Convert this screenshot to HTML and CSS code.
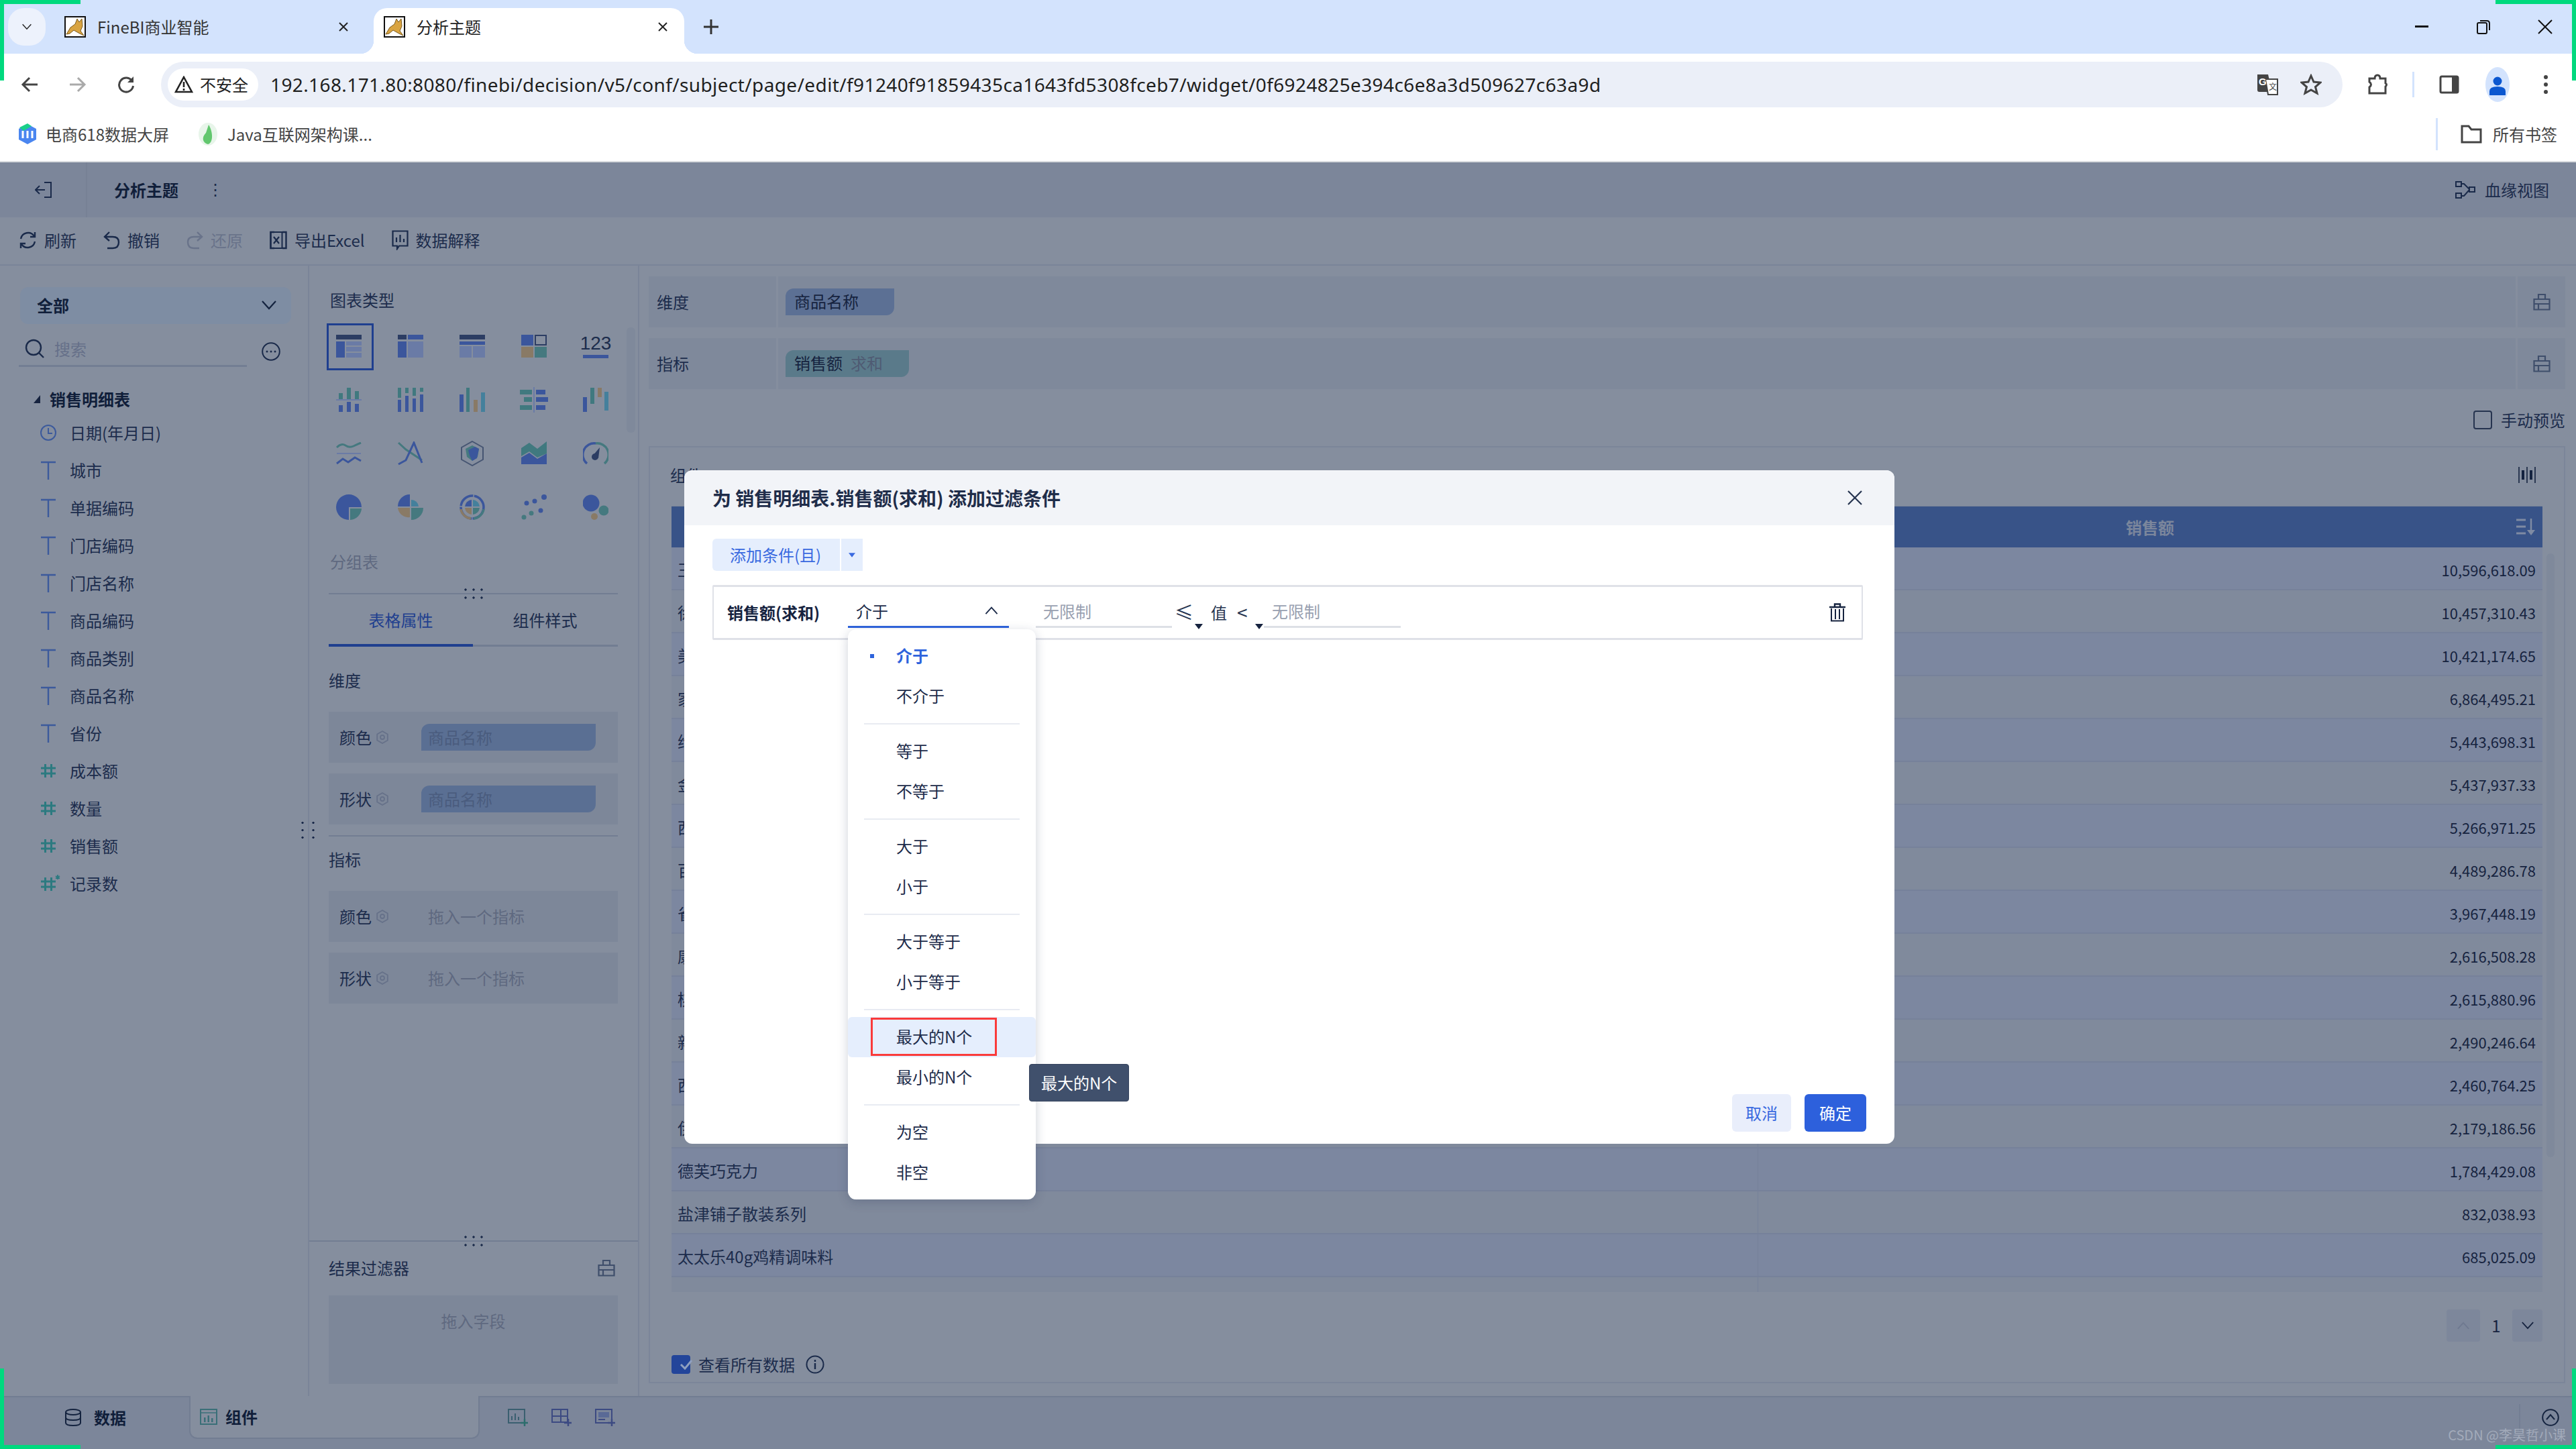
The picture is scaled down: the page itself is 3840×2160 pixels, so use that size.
FILE: index.html
```html
<!DOCTYPE html>
<html lang="zh-CN">
<head>
<meta charset="utf-8">
<title>分析主题</title>
<link rel="stylesheet" href="styles.css">
</head>
<body>
<svg class="defs" width="0" height="0">
  <defs>
    <symbol id="cat" viewBox="0 0 32 32">
      <rect x="1" y="1" width="30" height="30" fill="#fff" stroke="#111" stroke-width="2"/>
      <path d="M3 27 L9 17 L16 12 L19 4 L22 9 L26 4 L27 15 L24 22 L29 29 L21 25 L14 21 L8 26 Z" fill="#d9a441" stroke="#7a5a1c" stroke-width="1"/>
    </symbol>
    <symbol id="x" viewBox="0 0 24 24"><path d="M4 4 L20 20 M20 4 L4 20" fill="none" stroke="currentColor" stroke-width="2.6"/></symbol>
    <symbol id="T" viewBox="0 0 24 30"><path d="M1 3 H23 M12 3 V29" fill="none" stroke="#3c5a9c" stroke-width="2.4"/></symbol>
    <symbol id="hash" viewBox="0 0 24 24"><path d="M7.5 2 V22 M16.5 2 V22 M1 8 H23 M1 16 H23" fill="none" stroke="#2c7a80" stroke-width="3"/></symbol>
    <symbol id="gear" viewBox="0 0 20 20"><path d="M10 1 L17.8 5.5 V14.5 L10 19 L2.2 14.5 V5.500 Z" fill="none" stroke="#667189" stroke-width="1.8"/><circle cx="10" cy="10" r="3" fill="none" stroke="#667189" stroke-width="1.800"/></symbol>
    <symbol id="kit" viewBox="0 0 26 26"><path d="M1.500 9 H24.500 V24.500 H1.500 Z M8 9 V2 H18 V9 M1.500 16 H24.500 M8 16 V24" fill="none" stroke="#3f4e6b" stroke-width="2.200"/></symbol>
    <symbol id="tri" viewBox="0 0 12 8"><path d="M0 0 H12 L6 8 Z" fill="currentColor"/></symbol>
    <symbol id="chev" viewBox="0 0 22 14"><path d="M1 1 L11 12 L21 1" fill="none" stroke="currentColor" stroke-width="2.200"/></symbol>
  </defs>
</svg>

<div class="page">
  <header class="tabbar">
    <div class="tab-menu"><svg class="ico-chev" width="14" height="10"><use href="#chev"/></svg></div>
    <div class="tab tab-a"><svg width="32" height="32"><use href="#cat"/></svg><span class="tab-title">FineBI商业智能</span><svg class="tab-x" width="18" height="18"><use href="#x"/></svg></div>
    <div class="tab tab-b"><svg width="32" height="32"><use href="#cat"/></svg><span class="tab-title">分析主题</span><svg class="tab-x" width="18" height="18"><use href="#x"/></svg></div>
    <svg class="tab-plus" width="22" height="22" viewBox="0 0 22 22"><path d="M11 0 V22 M0 11 H22" stroke="#333" stroke-width="3"/></svg>
    <div class="win">
      <div class="win-btn"><svg width="20" height="4"><rect width="20" height="3" fill="#111"/></svg></div>
      <div class="win-btn"><svg width="20" height="22" viewBox="0 0 20 22"><rect x="1" y="5" width="14" height="16" rx="2" fill="none" stroke="#111" stroke-width="2"/><path d="M5 2 H15 Q19 2 19 6 V16" fill="none" stroke="#111" stroke-width="2"/></svg></div>
      <div class="win-btn"><svg width="22" height="22" viewBox="0 0 22 22"><path d="M1 1 L21 21 M21 1 L1 21" stroke="#111" stroke-width="2"/></svg></div>
    </div>
  </header>

  <div class="addrbar">
    <div class="nav-btn"><svg width="26" height="24" viewBox="0 0 26 24"><path d="M13 2 L3 12 L13 22 M3 12 H25" fill="none" stroke="#444" stroke-width="3"/></svg></div>
    <div class="nav-btn"><svg width="26" height="24" viewBox="0 0 26 24"><path d="M13 2 L23 12 L13 22 M23 12 H1" fill="none" stroke="#aaa" stroke-width="3"/></svg></div>
    <div class="nav-btn"><svg width="26" height="26" viewBox="0 0 26 26"><path d="M22 8 A10.500 10.500 0 1 0 23.500 15" fill="none" stroke="#444" stroke-width="3"/><path d="M24 1 V10 H15 Z" fill="#444"/></svg></div>
    <div class="omni">
      <div class="chip"><svg width="28" height="26" viewBox="0 0 28 26"><path d="M14 2 L26 24 H2 Z" fill="none" stroke="#222" stroke-width="2.600"/><path d="M14 9 V17 M14 19 V22" stroke="#222" stroke-width="2.600"/></svg><span>不安全</span></div>
      <span class="url">192.168.171.80:8080/finebi/decision/v5/conf/subject/page/edit/f91240f91859435ca1643fd5308fceb7/widget/0f6924825e394c6e8a3d509627c63a9d</span>
      <div class="omni-btn"><svg width="34" height="34" viewBox="0 0 34 34"><path d="M2 2 H18 L24 28 H5 Q2 28 2 25 Z" fill="#444"/><path d="M14 9 H32 V32 H18 Z" fill="#fff" stroke="#444" stroke-width="2"/><text x="4" y="18" class="g-text">G</text><text x="19" y="25" class="a-text">文</text></svg></div>
      <div class="omni-btn"><svg width="32" height="32" viewBox="0 0 32 32"><path d="M16 3 L20 12 L30 13 L22.500 19.500 L25 29 L16 24 L7 29 L9.500 19.500 L2 13 L12 12 Z" fill="none" stroke="#444" stroke-width="3"/></svg></div>
    </div>
    <div class="nav-btn nav-puzzle"><svg width="32" height="32" viewBox="0 0 32 32"><path d="M4 7 H12 Q12 2 16 2 Q20 2 20 7 H28 V14 Q31 16 28 19 V29 H4 V20 Q9 16 4 12 Z" fill="none" stroke="#444" stroke-width="3"/></svg></div>
    <div class="vsep"></div>
    <div class="nav-btn"><svg width="30" height="28" viewBox="0 0 30 28"><rect x="2" y="2" width="26" height="24" rx="2" fill="none" stroke="#444" stroke-width="3"/><rect x="19" y="2" width="9" height="24" fill="#444"/></svg></div>
    <div class="nav-btn"><div class="avatar"><svg width="28" height="32" viewBox="0 0 28 32"><circle cx="14" cy="9" r="6.500" fill="#0b57d0"/><path d="M2 30 V24 Q2 17 14 17 Q26 17 26 24 V30 Z" fill="#0b57d0"/></svg></div></div>
    <div class="nav-btn"><svg width="6" height="30" viewBox="0 0 6 30"><circle cx="3" cy="4" r="3" fill="#444"/><circle cx="3" cy="15" r="3" fill="#444"/><circle cx="3" cy="26" r="3" fill="#444"/></svg></div>
  </div>

  <div class="bookmarks">
    <svg class="bm-ico" width="28" height="32" viewBox="0 0 28 32"><path d="M14 1 L27 8 V24 L14 31 L1 24 V8 Z" fill="#4a86f0"/><path d="M7 11 V22 M14 11 V22 M21 11 V22" stroke="#fff" stroke-width="3"/><path d="M2 6 L14 0 L20 4 L8 11 Z" fill="#19d08a"/></svg>
    <span class="bm-text">电商618数据大屏</span>
    <svg class="bm-ico bm-second" width="28" height="34" viewBox="0 0 28 34"><ellipse cx="14" cy="17" rx="14" ry="17" fill="#e8f5ea"/><path d="M15 3 C22 14 22 30 14 32 C6 30 4 22 11 15 Z" fill="#62c76e"/></svg>
    <span class="bm-text">Java互联网架构课...</span>
    <div class="bm-right">
      <div class="vsep vsep-tall"></div>
      <svg width="32" height="28" viewBox="0 0 32 28"><path d="M2 2 H12 L16 7 H30 V26 H2 Z" fill="none" stroke="#444" stroke-width="3"/></svg>
      <span class="bm-text">所有书签</span>
    </div>
  </div>

  <div class="app">
    <div class="app-head">
      <div class="back-cell"><svg width="26" height="26" viewBox="0 0 26 26"><path d="M14 2 H24 V24 H14 M1 13 H15 M7 7 L1 13 L7 19" fill="none" stroke="#1a2a4a" stroke-width="2"/></svg></div>
      <span class="subject">分析主题</span>
      <span class="kebab">⋮</span>
      <div class="lineage"><svg width="30" height="26" viewBox="0 0 30 26"><rect x="1" y="1" width="8" height="7" fill="none" stroke="#1a2a4a" stroke-width="2"/><rect x="1" y="18" width="8" height="7" fill="none" stroke="#1a2a4a" stroke-width="2"/><rect x="21" y="9" width="8" height="7" fill="none" stroke="#1a2a4a" stroke-width="2"/><path d="M9 4 H13 L21 12 M9 22 H13 L21 13" fill="none" stroke="#1a2a4a" stroke-width="2"/></svg><span>血缘视图</span></div>
    </div>
    <div class="toolbar">
      <div class="tool"><svg width="27" height="28" viewBox="0 0 27 28"><path d="M3 12 A11 11 0 0 1 23 8 M24 16 A11 11 0 0 1 4 20" fill="none" stroke="#1a2a4a" stroke-width="2.400"/><path d="M24 2 V9 H17 M3 26 V19 H10" fill="none" stroke="#1a2a4a" stroke-width="2.400"/></svg><span>刷新</span></div>
      <div class="tool"><svg width="25" height="28" viewBox="0 0 25 28"><path d="M9 2 L2 9 L9 15 M2 9 H14 Q23 9 23 17 Q23 26 14 26 H6" fill="none" stroke="#1a2a4a" stroke-width="2.400"/></svg><span>撤销</span></div>
      <div class="tool tool-off"><svg width="25" height="28" viewBox="0 0 25 28"><path d="M16 2 L23 9 L16 15 M23 9 H11 Q2 9 2 17 Q2 26 11 26 H19" fill="none" stroke="#69738a" stroke-width="2.400"/></svg><span>还原</span></div>
      <div class="tool"><svg width="26" height="28" viewBox="0 0 26 28"><path d="M7 2 H1.500 V26 H7 M19 2 H24.500 V26 H19" fill="none" stroke="#1a2a4a" stroke-width="2.400"/><rect x="1.500" y="2" width="17" height="24" fill="none" stroke="#1a2a4a" stroke-width="2"/><path d="M6 9 L14 19 M14 9 L6 19" stroke="#1a2a4a" stroke-width="2.200"/></svg><span>导出Excel</span></div>
      <div class="tool"><svg width="25" height="30" viewBox="0 0 25 30"><path d="M1.500 1.500 H23.500 V23.500 H11 L8 28 V23.500 H1.500 Z M7 11 V18 M12.500 7 V18 M18 13 V18" fill="none" stroke="#1a2a4a" stroke-width="2.200"/></svg><span>数据解释</span></div>
    </div>

    <div class="main">
      <aside class="fields">
        <div class="scope"><span>全部</span><svg class="scope-chev" width="22" height="14"><use href="#chev"/></svg></div>
        <div class="search-row">
          <div class="search"><svg width="30" height="30" viewBox="0 0 30 30"><circle cx="13" cy="13" r="11" fill="none" stroke="#1a2a4a" stroke-width="2.400"/><path d="M21 21 L28 28" stroke="#1a2a4a" stroke-width="2.400"/></svg><span>搜索</span></div>
          <svg class="more" width="28" height="28" viewBox="0 0 28 28"><circle cx="14" cy="14" r="12.800" fill="none" stroke="#1a2a4a" stroke-width="2"/><circle cx="8" cy="14" r="1.500" fill="#1a2a4a"/><circle cx="14" cy="14" r="1.500" fill="#1a2a4a"/><circle cx="20" cy="14" r="1.500" fill="#1a2a4a"/></svg>
        </div>
        <div class="tree-title"><i class="tree-tri"></i><span>销售明细表</span></div>
        <ul class="tree">
          <li><svg width="24" height="26" viewBox="0 0 24 26"><circle cx="12" cy="13" r="11" fill="none" stroke="#3c5a9c" stroke-width="2"/><path d="M12 6 V14 H18" fill="none" stroke="#3c5a9c" stroke-width="2"/></svg><span>日期(年月日)</span></li>
          <li><svg width="24" height="30"><use href="#T"/></svg><span>城市</span></li>
          <li><svg width="24" height="30"><use href="#T"/></svg><span>单据编码</span></li>
          <li><svg width="24" height="30"><use href="#T"/></svg><span>门店编码</span></li>
          <li><svg width="24" height="30"><use href="#T"/></svg><span>门店名称</span></li>
          <li><svg width="24" height="30"><use href="#T"/></svg><span>商品编码</span></li>
          <li><svg width="24" height="30"><use href="#T"/></svg><span>商品类别</span></li>
          <li><svg width="24" height="30"><use href="#T"/></svg><span>商品名称</span></li>
          <li><svg width="24" height="30"><use href="#T"/></svg><span>省份</span></li>
          <li><svg width="24" height="24"><use href="#hash"/></svg><span>成本额</span></li>
          <li><svg width="24" height="24"><use href="#hash"/></svg><span>数量</span></li>
          <li><svg width="24" height="24"><use href="#hash"/></svg><span>销售额</span></li>
          <li><svg class="hash-star" width="30" height="26" viewBox="0 0 30 26"><path d="M7.500 4 V24 M16.500 4 V24 M1 10 H23 M1 18 H23" fill="none" stroke="#2c7a80" stroke-width="3"/><path d="M26 0 V7 M23 2 L29 5.500 M29 2 L23 5.500" stroke="#2c7a80" stroke-width="1.800"/></svg><span>记录数</span></li>
        </ul>
        <div class="grip grip-v"></div>
      </aside>

      <section class="config">
        <div class="config-top">
          <div class="lbl lbl-head">图表类型</div>
          <div class="chart-grid">
            <div class="chart is-on"><svg width="38" height="34" viewBox="0 0 38 34"><rect width="38" height="7" fill="#2c3d63"/><rect y="10" width="13" height="24" fill="#3b569c"/><rect x="15" y="10" width="23" height="6" fill="#6a7ba6"/><rect x="15" y="18" width="23" height="7" fill="#6a7ba6"/><rect x="15" y="27" width="23" height="7" fill="#6a7ba6"/></svg></div>
            <div class="chart"><svg width="38" height="34" viewBox="0 0 38 34"><rect width="13" height="7" fill="#2c3d63"/><rect x="15" width="23" height="7" fill="#3b569c"/><rect y="10" width="13" height="24" fill="#3b569c"/><rect x="15" y="10" width="23" height="24" fill="#6a7ba6"/></svg></div>
            <div class="chart"><svg width="38" height="34" viewBox="0 0 38 34"><rect width="38" height="7" fill="#2c3d63"/><rect y="10" width="38" height="5" fill="#3b569c"/><rect y="17" width="18" height="17" fill="#6a7ba6"/><rect x="20" y="17" width="18" height="17" fill="#6a7ba6"/></svg></div>
            <div class="chart"><svg width="38" height="34" viewBox="0 0 38 34"><rect width="18" height="16" fill="#3b569c"/><rect x="21" y="1" width="16" height="14" fill="none" stroke="#2c3d63" stroke-width="2"/><rect y="18" width="18" height="16" fill="#897a66"/><rect x="20" y="18" width="18" height="16" fill="#45797f"/></svg></div>
            <div class="chart chart-num"><span>123</span><i></i></div>

            <div class="chart"><svg width="38" height="36" viewBox="0 0 38 36"><rect x="4" y="8" width="6" height="10" fill="#40797f"/><rect x="16" width="6" height="18" fill="#40797f"/><rect x="28" y="5" width="6" height="13" fill="#40797f"/><rect y="17" width="38" height="2" fill="#6a7ba6"/><rect x="4" y="26" width="6" height="10" fill="#3b569c"/><rect x="16" y="21" width="6" height="15" fill="#3b569c"/><rect x="28" y="24" width="6" height="12" fill="#3b569c"/></svg></div>
            <div class="chart"><svg width="38" height="36" viewBox="0 0 38 36"><rect width="5" height="15" fill="#40797f"/><rect y="18" width="5" height="18" fill="#3b569c"/><rect x="11" width="5" height="8" fill="#40797f"/><rect x="11" y="12" width="5" height="24" fill="#3b569c"/><rect x="22" width="5" height="12" fill="#40797f"/><rect x="22" y="16" width="5" height="20" fill="#3b569c"/><rect x="33" width="5" height="6" fill="#40797f"/><rect x="33" y="10" width="5" height="26" fill="#3b569c"/></svg></div>
            <div class="chart"><svg width="38" height="36" viewBox="0 0 38 36"><rect y="10" width="6" height="26" fill="#3b569c"/><rect x="10" width="5" height="36" fill="#40797f"/><rect x="21" y="18" width="6" height="18" fill="#897a66"/><rect x="32" y="7" width="6" height="29" fill="#44809c"/></svg></div>
            <div class="chart"><svg width="42" height="38" viewBox="0 0 42 38"><rect x="20" width="2" height="38" fill="#6a7ba6"/><rect y="4" width="18" height="7" fill="#40797f"/><rect x="24" y="4" width="14" height="7" fill="#3b569c"/><rect x="6" y="15" width="12" height="7" fill="#40797f"/><rect x="24" y="15" width="18" height="7" fill="#3b569c"/><rect y="27" width="18" height="7" fill="#40797f"/><rect x="24" y="27" width="14" height="7" fill="#3b569c"/></svg></div>
            <div class="chart"><svg width="38" height="36" viewBox="0 0 38 36"><rect y="14" width="6" height="22" fill="#3b569c"/><rect x="11" width="6" height="24" fill="#40797f"/><rect x="22" width="6" height="14" fill="#897a66"/><rect x="32" y="6" width="6" height="28" fill="#44809c"/></svg></div>

            <div class="chart"><svg width="38" height="34" viewBox="0 0 38 34"><path d="M1 8 Q8 1 14 5 T26 6 T37 1" fill="none" stroke="#45797f" stroke-width="3"/><path d="M1 17 H37" stroke="#6a7ba6" stroke-width="2"/><path d="M1 32 L10 25 L18 30 L28 23 L37 28" fill="none" stroke="#3b569c" stroke-width="3"/></svg></div>
            <div class="chart"><svg width="38" height="36" viewBox="0 0 38 36"><path d="M1 2 L12 12 L36 28" fill="none" stroke="#45797f" stroke-width="3"/><path d="M1 34 L12 28 L24 2 L36 32" fill="none" stroke="#3b569c" stroke-width="3"/></svg></div>
            <div class="chart"><svg width="36" height="38" viewBox="0 0 36 38"><path d="M18 1 L34 10 V28 L18 37 L2 28 V10 Z" fill="none" stroke="#465572" stroke-width="2"/><path d="M8 12 L18 7 L28 12 L26 24 L18 30 L10 24 Z" fill="#45797f"/><path d="M12 14 L22 9 L28 12 L25 26 L18 30 L14 22 Z" fill="#3b569c"/></svg></div>
            <div class="chart"><svg width="38" height="36" viewBox="0 0 38 36"><path d="M0 10 L12 2 L24 11 L38 0 V18 L24 24 L12 15 L0 22 Z" fill="#40797f"/><path d="M0 24 L12 17 L24 26 L38 18 V34 H0 Z" fill="#3b569c"/></svg></div>
            <div class="chart"><svg width="38" height="36" viewBox="0 0 38 36"><path d="M6 33 A17 17 0 0 1 19 3" fill="none" stroke="#3b569c" stroke-width="3.500"/><path d="M19 3 A17 17 0 0 1 32 33" fill="none" stroke="#45797f" stroke-width="3.500"/><path d="M14 22 L25 9 L23 25 Z" fill="#2c3d63"/><circle cx="18" cy="23" r="5" fill="#2c3d63"/></svg></div>

            <div class="chart"><svg width="38" height="38" viewBox="0 0 38 38"><path d="M19 0 A19 19 0 0 1 38 19 H19 V38 A19 19 0 0 1 19 0 Z" fill="#3b569c"/><path d="M21 21 H38 A18 18 0 0 1 21 38 Z" fill="#45797f"/></svg></div>
            <div class="chart"><svg width="38" height="38" viewBox="0 0 38 38"><path d="M18 0 V18 H0 A18 18 0 0 1 18 0 Z" fill="#3b569c"/><path d="M20 8 A11 11 0 0 1 31 18 H20 Z" fill="#44809c"/><path d="M0 20 H18 V34 A16 16 0 0 1 0 20 Z" fill="#897a66"/><path d="M20 20 H38 A18 18 0 0 1 20 38 Z" fill="#45797f"/></svg></div>
            <div class="chart"><svg width="38" height="38" viewBox="0 0 38 38"><circle cx="19" cy="19" r="17" fill="none" stroke="#3b569c" stroke-width="3.500" stroke-dasharray="26 1.500"/><path d="M2 22 A17 17 0 0 0 17 36" fill="none" stroke="#897a66" stroke-width="3.500"/><path d="M21 36 A17 17 0 0 0 36 22" fill="none" stroke="#45797f" stroke-width="3.500"/><path d="M20 8 A11 11 0 0 1 30 18 H20 Z" fill="#44809c"/><path d="M18 8 A11 11 0 0 0 8 18 H18 Z" fill="#3b569c"/><path d="M8 20 H18 V30 A11 11 0 0 1 8 20 Z" fill="#897a66"/><path d="M20 20 H30 A11 11 0 0 1 20 30 Z" fill="#45797f"/></svg></div>
            <div class="chart"><svg width="38" height="38" viewBox="0 0 38 38"><g fill="#3b569c"><circle cx="34" cy="4" r="4"/><circle cx="20" cy="10" r="3.500"/><circle cx="8" cy="13" r="3.500"/><circle cx="29" cy="24" r="3.500"/></g><g fill="#45797f"><circle cx="15" cy="28" r="3.500"/><circle cx="4" cy="34" r="3.500"/></g></svg></div>
            <div class="chart"><svg width="38" height="38" viewBox="0 0 38 38"><circle cx="12" cy="13" r="12.500" fill="#3b569c"/><circle cx="31" cy="24" r="7.500" fill="#45797f"/><circle cx="17" cy="33" r="5" fill="#897a66"/></svg></div>
          </div>
          <div class="lbl lbl-muted">分组表</div>
          <div class="divider with-grip"><div class="grip grip-h"></div></div>
          <div class="tabs"><span class="tab-on">表格属性</span><span>组件样式</span></div>
          <div class="lbl lbl-dim">维度</div>
          <div class="slot slot-first"><span class="slot-name">颜色</span><svg width="20" height="20"><use href="#gear"/></svg><span class="slot-pill">商品名称</span></div>
          <div class="slot"><span class="slot-name">形状</span><svg width="20" height="20"><use href="#gear"/></svg><span class="slot-pill">商品名称</span></div>
          <div class="divider divider-slots"></div>
          <div class="lbl lbl-kpi">指标</div>
          <div class="slot slot-first"><span class="slot-name">颜色</span><svg width="20" height="20"><use href="#gear"/></svg><span class="slot-ph">拖入一个指标</span></div>
          <div class="slot"><span class="slot-name">形状</span><svg width="20" height="20"><use href="#gear"/></svg><span class="slot-ph">拖入一个指标</span></div>
        </div>
        <div class="config-bottom">
          <div class="grip grip-h grip-edge"></div>
          <div class="filter-head"><span>结果过滤器</span><svg width="26" height="26"><use href="#kit"/></svg></div>
          <div class="drop-box">拖入字段</div>
        </div>
        <div class="thumb thumb-config"></div>
      </section>

      <section class="stage">
        <div class="shelf">
          <div class="shelf-name">维度</div>
          <div class="shelf-body"><span class="pill pill-dim">商品名称</span></div>
          <div class="shelf-end"><svg width="26" height="26"><use href="#kit"/></svg></div>
        </div>
        <div class="shelf shelf-two">
          <div class="shelf-name">指标</div>
          <div class="shelf-body"><span class="pill pill-kpi">销售额<em>求和</em></span></div>
          <div class="shelf-end"><svg width="26" height="26"><use href="#kit"/></svg></div>
        </div>
        <div class="preview"><i class="box-check"></i><span>手动预览</span></div>
        <div class="widget">
          <div class="widget-head"><span>组件</span><svg width="26" height="26" viewBox="0 0 26 26"><path d="M1 1 V25 M13 1 V25 M25 1 V25" stroke="#14233f" stroke-width="1.600"/><rect x="5" y="6" width="4" height="14" fill="#14233f"/><rect x="17" y="6" width="4" height="14" fill="#14233f"/></svg></div>
          <div class="table">
            <div class="thead"><div class="th"></div><div class="th th-num">销售额<svg class="sort" width="28" height="26" viewBox="0 0 28 26"><path d="M0 2 H14 M0 12 H14 M0 22 H14" stroke="#7f8ba3" stroke-width="3"/><path d="M22 0 V22" stroke="#7f8ba3" stroke-width="2.500"/><path d="M16 17 H28 L22 25 Z" fill="#7f8ba3"/></svg></div></div>
            <div class="tr"><div class="td">王老吉</div><div class="td td-num">10,596,618.09</div></div>
            <div class="tr"><div class="td">徐福记</div><div class="td td-num">10,457,310.43</div></div>
            <div class="tr"><div class="td">美汁源</div><div class="td td-num">10,421,174.65</div></div>
            <div class="tr"><div class="td">家乐氏</div><div class="td td-num">6,864,495.21</div></div>
            <div class="tr"><div class="td">维他奶</div><div class="td td-num">5,443,698.31</div></div>
            <div class="tr"><div class="td">金龙鱼</div><div class="td td-num">5,437,937.33</div></div>
            <div class="tr"><div class="td">西麦</div><div class="td td-num">5,266,971.25</div></div>
            <div class="tr"><div class="td">百事</div><div class="td td-num">4,489,286.78</div></div>
            <div class="tr"><div class="td">雀巢</div><div class="td td-num">3,967,448.19</div></div>
            <div class="tr"><div class="td">康师傅</div><div class="td td-num">2,616,508.28</div></div>
            <div class="tr"><div class="td">桃李</div><div class="td td-num">2,615,880.96</div></div>
            <div class="tr"><div class="td">新希望</div><div class="td td-num">2,490,246.64</div></div>
            <div class="tr"><div class="td">西瓜汁</div><div class="td td-num">2,460,764.25</div></div>
            <div class="tr"><div class="td">伊利</div><div class="td td-num">2,179,186.56</div></div>
            <div class="tr"><div class="td">德芙巧克力</div><div class="td td-num">1,784,429.08</div></div>
            <div class="tr"><div class="td">盐津铺子散装系列</div><div class="td td-num">832,038.93</div></div>
            <div class="tr"><div class="td">太太乐40g鸡精调味料</div><div class="td td-num">685,025.09</div></div>
            <div class="tr tr-end"><div class="td"></div><div class="td"></div></div>
          </div>
          <div class="pager"><span class="pg-btn pg-off"><svg width="18" height="12"><use href="#chev"/></svg></span><span class="pg-num">1</span><span class="pg-btn"><svg width="18" height="12"><use href="#chev"/></svg></span></div>
          <div class="all-data"><i class="check-on"><svg width="20" height="16" viewBox="0 0 20 16"><path d="M2 8 L8 14 L18 2" fill="none" stroke="#8fa0c0" stroke-width="3"/></svg></i><span>查看所有数据</span><svg width="28" height="28" viewBox="0 0 28 28"><circle cx="14" cy="14" r="12.500" fill="none" stroke="#1a2a4a" stroke-width="2"/><path d="M14 12 V21 M14 7 V10" stroke="#1a2a4a" stroke-width="2.400"/></svg></div>
          <div class="thumb thumb-table"></div>
        </div>
      </section>
    </div>

    <footer class="dock">
      <div class="dock-tab"><svg width="26" height="26" viewBox="0 0 26 26"><ellipse cx="13" cy="5" rx="11" ry="4" fill="none" stroke="#14233f" stroke-width="2"/><path d="M2 5 V21 Q2 25 13 25 Q24 25 24 21 V5 M2 13 Q2 17 13 17 Q24 17 24 13" fill="none" stroke="#14233f" stroke-width="2"/></svg><span>数据</span></div>
      <div class="dock-tab dock-on"><svg width="26" height="24" viewBox="0 0 26 24"><rect x="1" y="1" width="24" height="22" fill="none" stroke="#3a6f78" stroke-width="2"/><path d="M1 6 H25" stroke="#3a6f78" stroke-width="1.500"/><rect x="6" y="13" width="2.500" height="7" fill="#3a6f78"/><rect x="11.500" y="10" width="2.500" height="10" fill="#3a6f78"/><rect x="17" y="14" width="2.500" height="6" fill="#3a6f78"/></svg><span>组件</span></div>
      <div class="dock-tools">
        <svg width="30" height="26" viewBox="0 0 30 26"><rect x="1" y="1" width="24" height="20" fill="none" stroke="#3a5f70" stroke-width="2"/><path d="M6 17 V11 M11 17 V7 M16 17 V12" stroke="#3a5f70" stroke-width="2"/><path d="M25 15 V26 M19 21 H30" stroke="#2c6d6d" stroke-width="2.500"/></svg>
        <svg width="30" height="26" viewBox="0 0 30 26"><path d="M1 1 H24 V20 H1 Z M1 11 H24 M14 1 V20" fill="none" stroke="#3c4a82" stroke-width="2"/><path d="M25 15 V26 M19 21 H30" stroke="#3c4a82" stroke-width="2.500"/></svg>
        <svg width="30" height="26" viewBox="0 0 30 26"><rect x="1" y="1" width="24" height="20" fill="none" stroke="#3c4a82" stroke-width="2"/><rect x="5" y="5" width="16" height="8" fill="#5a6a96"/><path d="M5 16 H15" stroke="#3c4a82" stroke-width="2"/><path d="M25 15 V26 M19 21 H30" stroke="#3c4a82" stroke-width="2.500"/></svg>
      </div>
      <div class="dock-end"><i class="dock-sep"></i><svg width="26" height="26" viewBox="0 0 26 26"><circle cx="13" cy="13" r="11.800" fill="none" stroke="#14233f" stroke-width="2"/><path d="M7 16 L13 9 L19 16" fill="none" stroke="#14233f" stroke-width="2"/></svg></div>
    </footer>
  </div>

  <div class="dialog">
    <div class="dlg-head"><span class="dlg-title">为 销售明细表.销售额(求和) 添加过滤条件</span><svg class="dlg-x" width="22" height="22" viewBox="0 0 22 22"><path d="M1 1 L21 21 M21 1 L1 21" stroke="#26344f" stroke-width="2.200"/></svg></div>
    <div class="dlg-body">
      <div class="split"><span class="split-main">添加条件(且)</span><span class="split-arrow"><svg width="10" height="7"><use href="#tri"/></svg></span></div>
      <div class="cond">
        <span class="cond-name">销售额(求和)</span>
        <div class="cond-select"><span>介于</span><svg class="flip" width="20" height="12"><use href="#chev"/></svg></div>
        <span class="cond-input">无限制</span>
        <span class="cmp cmp-a">≤<svg class="cmp-tri" width="12" height="8"><use href="#tri"/></svg></span>
        <span class="cond-val">值</span>
        <span class="cmp cmp-b">&lt;<svg class="cmp-tri" width="12" height="8"><use href="#tri"/></svg></span>
        <span class="cond-input cond-input-b">无限制</span>
        <svg class="trash" width="24" height="28" viewBox="0 0 24 28"><path d="M0 6 H24 M8 6 V1.500 H16 V6" fill="none" stroke="#16233f" stroke-width="2.400"/><path d="M3 8 V26.500 H21 V8 M9 9 V24 M15 9 V24" fill="none" stroke="#16233f" stroke-width="2"/></svg>
      </div>
    </div>
    <div class="dlg-foot"><button class="btn btn-ghost">取消</button><button class="btn btn-main">确定</button></div>

    <div class="menu">
      <div class="opt opt-on">介于</div>
      <div class="opt">不介于</div>
      <div class="opt-sep"></div>
      <div class="opt">等于</div>
      <div class="opt">不等于</div>
      <div class="opt-sep"></div>
      <div class="opt">大于</div>
      <div class="opt">小于</div>
      <div class="opt-sep"></div>
      <div class="opt">大于等于</div>
      <div class="opt">小于等于</div>
      <div class="opt-sep"></div>
      <div class="opt opt-hover">最大的N个<i class="mark"></i></div>
      <div class="opt">最小的N个</div>
      <div class="opt-sep"></div>
      <div class="opt">为空</div>
      <div class="opt">非空</div>
    </div>
    <div class="tip">最大的N个</div>
  </div>

  <div class="watermark">CSDN @李昊哲小课</div>
  <i class="corner c-tl"></i><i class="corner c-tr"></i><i class="corner c-bl"></i><i class="corner c-br"></i>
</div>
</body>
</html>
```

FILE: styles.css
```css
* { box-sizing: border-box; }
html, body { margin: 0; padding: 0; }
body { width: 3840px; height: 2160px; overflow: hidden; background: #858e9e; color: #16233f; font-family: "Noto Sans CJK SC", "Noto Sans", sans-serif; font-size: 24px; line-height: 28px; }
svg { display: block; flex: none; }
i, em { font-style: normal; }
ul { list-style: none; margin: 0; padding: 0; }
.defs { position: absolute; }
.page { position: relative; width: 3840px; height: 2160px; display: flex; flex-direction: column; overflow: hidden; }

/* browser chrome */
.tabbar { height: 80px; flex: none; display: flex; background: #d3e3fd; color: #1f1f1f; }
.tab-menu { width: 56px; height: 56px; margin: 12px 12px 0 12px; border-radius: 24px; background: #edf2fc; display: flex; align-items: center; justify-content: center; }
.ico-chev { color: #222; }
.tab { height: 68px; margin-top: 12px; padding: 0 0 12px 16px; display: flex; align-items: center; gap: 17px; position: relative; color: #333; }
.tab-a { width: 477px; padding-right: 36px; }
.tab-b { width: 463px; padding-left: 15px; padding-right: 23px; background: #fff; border-radius: 20px 20px 0 0; color: #222; }
.tab-b::before, .tab-b::after { content: ""; position: absolute; bottom: 0; width: 20px; height: 20px; }
.tab-b::before { left: -20px; background: radial-gradient(circle at 0 0, transparent 20px, #fff 20.5px); }
.tab-b::after { right: -20px; background: radial-gradient(circle at 100% 0, transparent 20px, #fff 20.5px); }
.tab-title { flex: 1; white-space: nowrap; }
.tab-x { color: #222; }
.tab-plus { margin: 29px 0 0 29px; }
.win { margin-left: auto; display: flex; height: 80px; }
.win-btn { width: 92px; height: 80px; display: flex; align-items: center; justify-content: center; }

.addrbar { height: 80px; flex: none; display: flex; align-items: center; padding: 12px 0 0 8px; background: #fff; }
.nav-btn { width: 72px; height: 68px; display: flex; align-items: center; justify-content: center; }
.nav-puzzle { margin-left: 16px; }
.omni { width: 3252px; height: 68px; margin-left: 16px; padding: 0 15px 0 10px; border-radius: 34px; background: #ebeff8; display: flex; align-items: center; }
.chip { width: 135px; height: 48px; padding-left: 10px; border-radius: 24px; background: #fff; display: flex; align-items: center; gap: 10px; font-size: 24px; color: #222; flex: none; }
.url { flex: 1; margin-left: 18px; font-family: "Noto Sans", sans-serif; font-size: 28px; line-height: 44px; letter-spacing: .39px; color: #1f1f1f; white-space: nowrap; }
.omni-btn { width: 65px; height: 68px; display: flex; align-items: center; justify-content: center; flex: none; }
.g-text { font: 700 15px "Liberation Sans", sans-serif; fill: #fff; }
.a-text { font: 12px "Noto Sans CJK SC", sans-serif; fill: #444; }
.vsep { width: 3px; height: 38px; margin: 0 16px; background: #d3e3fd; flex: none; }
.vsep-tall { height: 48px; margin: 0 32px 0 0; }
.avatar { width: 36px; height: 52px; border-radius: 50%; background: #d3e3fd; display: flex; align-items: flex-end; justify-content: center; padding-bottom: 8px; }

.bookmarks { height: 82px; flex: none; display: flex; align-items: center; padding: 0 28px 0 27px; background: #fff; border-bottom: 2px solid #dadce0; color: #444; }
.bm-ico { margin-right: 13px; }
.bm-second { margin-left: 44px; margin-right: 15px; }
.bm-right { margin-left: auto; display: flex; align-items: center; gap: 16px; }
.bm-text { white-space: nowrap; }
.bm-right .vsep-tall { margin-right: 18px; }

/* app */
.app { flex: 1; min-height: 0; display: flex; flex-direction: column; }
.app-head { height: 82px; flex: none; display: flex; align-items: center; background: #7c869a; }
.back-cell { width: 130px; height: 82px; padding-left: 52px; display: flex; align-items: center; border-right: 2px solid #778195; }
.subject { margin-left: 40px; font-weight: 700; color: #101e3a; }
.kebab { margin-left: 43px; color: #1a2a4a; font-family: "Liberation Sans", sans-serif; }
.lineage { margin-left: auto; margin-right: 40px; display: flex; align-items: center; gap: 14px; color: #1c2c4c; }
.toolbar { height: 72px; flex: none; padding: 0 0 2px 28px; display: flex; align-items: center; gap: 40px; border-bottom: 2px solid #7a8498; background: #858e9e; }
.tool { display: flex; align-items: center; gap: 11px; color: #1c2c4c; }
.tool-off { color: #69738a; }

.main { flex: 1; min-height: 0; display: flex; }
.fields { width: 461px; flex: none; position: relative; padding: 32px 0 0 28px; border-right: 2px solid #7a8498; }
.scope { width: 404px; height: 55px; margin-left: 2px; padding: 0 22px 2px 25px; border-radius: 12px; background: #7e8da3; display: flex; align-items: center; justify-content: space-between; font-weight: 700; color: #101e3a; }
.scope-chev { color: #14233f; }
.search-row { display: flex; align-items: flex-end; }
.search { width: 340px; height: 64px; padding: 13px 0 0 9px; display: flex; align-items: center; gap: 14px; border-bottom: 3px solid #737e93; color: #667089; }
.more { margin: 0 0 9px 22px; }
.tree-title { height: 44px; margin-top: 26px; padding-left: 22px; display: flex; align-items: center; gap: 14px; font-weight: 700; color: #101e3a; }
.tree-tri { width: 0; height: 0; border-left: 10px solid transparent; border-bottom: 12px solid #16233f; }
.tree li { height: 56px; padding-left: 32px; display: flex; align-items: center; gap: 20px; color: #1c2c4c; }
.tree li .hash-star { margin-right: -6px; }
.grip { position: absolute; }
.grip-v { left: 443px; top: 825px; width: 32px; height: 33px; background: radial-gradient(circle, #1a2a4a 1.400px, transparent 1.900px) 0 0 / 16px 11px; }
.grip-h { left: 50%; width: 36px; height: 24px; margin-left: -18px; top: -11px; background: radial-gradient(circle, #1a2a4a 1.400px, transparent 1.900px) 0 0 / 12px 12px; }

.config { width: 492px; flex: none; position: relative; display: flex; flex-direction: column; border-right: 2px solid #7a8498; }
.config-top { flex: 1; min-height: 0; padding: 38px 30px 0 29px; }
.lbl { height: 28px; color: #1c2c4c; }
.lbl-head { margin: -1px 0 0 2px; }
.lbl-muted { margin: 27px 0 0 2px; color: #5f6980; }
.lbl-dim { margin-top: 36px; }
.lbl-kpi { margin-top: 20px; }
.chart-grid { display: grid; grid-template-columns: repeat(5, 92px); grid-auto-rows: 80px; margin: 15px 0 0 -16px; }
.chart { display: flex; align-items: center; justify-content: center; position: relative; }
.is-on::after { content: ""; position: absolute; left: 13px; top: 6px; width: 64px; height: 64px; border: 3px solid #1f3f8f; }
.chart-num { flex-direction: column; gap: 3px; }
.chart-num span { height: 28px; font: 28px/28px "Liberation Sans Narrow", "Liberation Sans", sans-serif; color: #1c2c4c; white-space: nowrap; }
.chart-num i { width: 38px; height: 5px; background: #3b569c; }
.divider { height: 2px; background: #727d92; }
.with-grip { position: relative; margin-top: 33px; }
.tabs { display: flex; height: 78px; border-bottom: 3px solid #727d92; }
.tabs span { width: 215px; display: flex; align-items: center; justify-content: center; padding-top: 1px; color: #1c2c4c; }
.tabs .tab-on { color: #1f3f8f; border-bottom: 4px solid #1f3f8f; margin-bottom: -3px; }
.slot { height: 76px; margin-top: 16px; padding-left: 16px; display: flex; align-items: center; background: #7d8799; }
.slot-first { margin-top: 33px; }
.slot-name { width: 48px; margin-right: 6px; color: #1c2c4c; }
.slot-pill { width: 260px; height: 40px; margin-left: 48px; padding-left: 10px; line-height: 40px; border-radius: 12px 0 12px 0; background: #5a6f93; color: #4a5c7e; }
.slot-ph { margin-left: 58px; color: #5f6980; }
.divider-slots { margin-top: 16px; }
.config-bottom { height: 232px; flex: none; position: relative; padding: 25px 30px 0 29px; border-top: 2px solid #727d92; }
.grip-edge { top: -13px; }
.filter-head { height: 28px; padding-right: 4px; display: flex; justify-content: space-between; align-items: center; color: #1c2c4c; }
.drop-box { height: 132px; margin-top: 27px; padding-top: 24px; text-align: center; background: #7d8799; color: #5f6980; }
.thumb { position: absolute; border-radius: 6px; background: #7f899b; }
.thumb-config { left: 473px; top: 92px; width: 13px; height: 157px; }
.thumb-table { right: 14px; top: 158px; width: 12px; height: 900px; }

.stage { flex: 1; min-width: 0; display: flex; flex-direction: column; padding: 16px 16px 19px 14px; }
.shelf { height: 76px; flex: none; display: flex; gap: 3px; }
.shelf-two { margin-top: 16px; }
.shelf-name, .shelf-body, .shelf-end { background: #7f899b; display: flex; align-items: center; }
.shelf-name { width: 190px; padding-left: 12px; color: #1c2c4c; }
.shelf-body { flex: 1; padding-left: 11px; }
.shelf-end { width: 71px; justify-content: center; }
.pill { height: 40px; padding-left: 13px; line-height: 38px; border-radius: 12px 0 12px 0; color: #16233f; }
.pill-dim { width: 162px; background: #5c7094; }
.pill-kpi { width: 184px; background: #5a7a8a; }
.pill-kpi em { margin-left: 12px; color: #4f5b73; }
.preview { height: 28px; margin-top: 32px; flex: none; display: flex; justify-content: flex-end; align-items: center; gap: 13px; color: #1c2c4c; }
.box-check { width: 28px; height: 28px; border: 2px solid #26344f; border-radius: 4px; }
.widget { flex: 1; min-height: 0; margin-top: 25px; padding: 0 32px; position: relative; border: 2px solid #7b8599; }
.widget-head { height: 87px; display: flex; align-items: center; justify-content: space-between; padding-bottom: 6px; color: #1c2c4c; }
.widget-head span { margin-left: -2px; }
.widget-head svg { margin-right: 10px; }
.thead { height: 62px; display: flex; background: #385388; border-top: 1px solid #7b8599; }
.th { flex: none; width: 1619px; }
.th-num { flex: 1; position: relative; display: flex; align-items: center; justify-content: center; font-weight: 700; color: #7b869c; }
.sort { position: absolute; right: 11px; top: 18px; }
.tr { height: 64px; display: flex; background: #808a9c; border-bottom: 2px solid #76819a; }
.tr:nth-child(even) { background: #7c87a0; }
.td { width: 1619px; flex: none; padding: 3px 0 0 9px; display: flex; align-items: center; white-space: nowrap; overflow: hidden; color: #1c2c4c; }
.td-num { flex: 1; width: auto; padding: 3px 10px 0 0; justify-content: flex-end; border-left: 1px solid #76819a; font-size: 22px; color: #16233f; }
.tr-end { height: 22px; border-bottom: 0; background: #808a9c; }
.tr-end .td + .td { flex: 1; border-left: 1px solid #76819a; }
.pager { height: 48px; margin-top: 26px; display: flex; justify-content: flex-end; align-items: center; }
.pg-btn { width: 45px; height: 48px; border-radius: 4px; background: #7d879b; display: flex; align-items: center; justify-content: center; color: #16233f; }
.pg-off { width: 50px; color: #6f7990; }
.pg-off svg { transform: rotate(180deg); }
.pg-num { width: 48px; text-align: center; }
.all-data { height: 28px; margin-top: 20px; display: flex; align-items: center; color: #1c2c4c; }
.all-data span { margin-left: 12px; }
.all-data svg:last-child { margin-left: 16px; }
.check-on { width: 28px; height: 28px; border-radius: 4px; background: #23459a; display: flex; align-items: center; justify-content: center; }

.dock { height: 79px; flex: none; display: flex; background: #7c869a; border-top: 2px solid #727d92; }
.dock-tab { width: 282px; height: 60px; padding-left: 96px; display: flex; align-items: center; gap: 18px; font-weight: 700; color: #101e3a; }
.dock-on { width: 433px; height: 64px; margin-top: -2px; padding-left: 14px; gap: 12px; background: #858e9e; border: 2px solid #727d92; border-top: 0; border-radius: 0 0 12px 12px; }
.dock-tools { margin-left: 42px; height: 60px; display: flex; align-items: center; gap: 35px; }
.dock-end { margin-left: auto; padding: 0 25px 17px 0; display: flex; align-items: center; gap: 32px; }
.dock-sep { width: 2px; height: 40px; background: #737e93; }

/* dialog */
.dialog { position: absolute; left: 1020px; top: 701px; width: 1804px; height: 1004px; display: flex; flex-direction: column; border-radius: 12px; background: #fff; color: #1d2c4a; }
.dlg-head { height: 82px; flex: none; padding: 0 48px 0 42px; display: flex; align-items: center; justify-content: space-between; background: #f2f4f8; border-radius: 12px 12px 0 0; }
.dlg-title { font-size: 28px; font-weight: 700; color: #1f2d4a; }
.dlg-body { flex: 1; padding: 20px 47px 0 42px; }
.split { display: flex; height: 48px; gap: 2px; }
.split-main { width: 190px; padding-left: 26px; line-height: 48px; border-radius: 6px 0 0 6px; background: #e5eefd; color: #3a6ae0; }
.split-arrow { width: 32px; display: flex; align-items: center; justify-content: center; background: #e5eefd; color: #3a6ae0; }
.cond { height: 82px; margin-top: 21px; padding-left: 20px; display: flex; align-items: center; border: solid #dfe1e8; border-width: 3px 2px; border-radius: 2px; }
.cond-name { width: 180px; flex: none; font-weight: 700; color: #16233f; }
.cond-select { width: 240px; height: 46px; padding: 7px 16px 0 12px; display: flex; align-items: flex-start; justify-content: space-between; border-bottom: 3px solid #2e63dc; }
.flip { transform: rotate(180deg); margin-top: 7px; color: #1d2c4a; }
.cond-input { width: 203px; height: 46px; margin-left: 40px; padding: 7px 0 0 11px; border-bottom: 3px solid #dde0e6; color: #98a0b0; }
.cond-input-b { width: 204px; margin-left: 0; padding-left: 12px; }
.cmp { height: 46px; padding: 8px 0 0 4px; position: relative; font-size: 28px; color: #26344f; }
.cmp-a { width: 48px; }
.cmp-b { width: 46px; margin-left: 9px; padding-left: 6px; }
.cmp-tri { position: absolute; top: 40px; left: 34px; color: #16233f; }
.cmp-b .cmp-tri { left: 33px; }
.cond-val { width: 24px; margin-left: 10px; color: #26344f; }
.trash { margin-left: auto; margin-right: 24px; }
.dlg-foot { flex: none; padding: 0 42px 18px 0; display: flex; justify-content: flex-end; gap: 20px; }
.btn { height: 56px; padding: 0; border: 0; border-radius: 6px; font: inherit; }
.btn-ghost { width: 88px; background: #e9eefb; color: #3a6ae0; }
.btn-main { width: 92px; background: #2d60dc; color: #fff; }
.menu { position: absolute; left: 244px; top: 237px; width: 280px; padding: 10px 0; border-radius: 12px; background: #fff; box-shadow: 0 4px 16px rgba(30, 45, 80, .22); }
.opt { height: 60px; padding-left: 72px; position: relative; line-height: 58px; color: #1d2c4a; }
.opt-on { color: #2e63dc; font-weight: 700; }
.opt-on::before { content: ""; position: absolute; left: 33px; top: 27px; width: 6px; height: 6px; background: #2e63dc; }
.opt-sep { height: 22px; padding-top: 10px; margin: 0 24px; }
.opt-sep::after { content: ""; display: block; height: 2px; background: #e8ebf2; }
.opt-hover { background: #e5eefd; border-radius: 6px; }
.mark { position: absolute; left: 34px; top: 1px; width: 188px; height: 57px; border: 3px solid #fa3a3a; }
.tip { position: absolute; left: 514px; top: 885px; width: 149px; height: 56px; padding-left: 17px; line-height: 54px; border: 1px solid #36445e; border-radius: 4px; background: #40506c; color: #fff; }

.watermark { position: absolute; right: 15px; bottom: 8px; font-size: 20px; line-height: 26px; color: #a3abba; white-space: nowrap; }
.corner { position: absolute; width: 120px; height: 120px; border: 0 solid #00d97e; }
.c-tl { left: 0; top: 0; border-width: 6px 0 0 6px; }
.c-tr { right: 0; top: 0; border-width: 6px 6px 0 0; }
.c-bl { left: 0; bottom: 0; border-width: 0 0 6px 6px; }
.c-br { right: 0; bottom: 0; border-width: 0 6px 6px 0; }
```
